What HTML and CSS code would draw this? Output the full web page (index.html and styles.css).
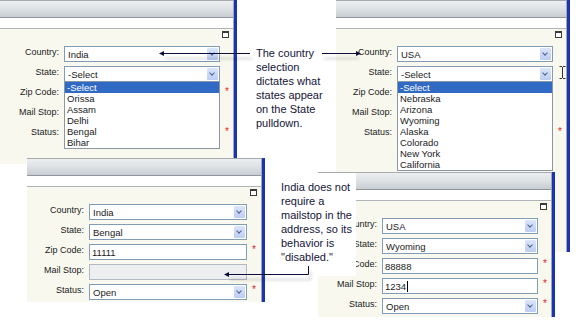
FILE: index.html
```html
<!DOCTYPE html>
<html lang="en">
<head>
    <meta charset="UTF-8">
    <meta name="viewport" content="width=device-width, initial-scale=1.0">
    <title>Country and State Behavior</title>
    <link rel="stylesheet" href="styles.css">
</head>
<body>
<div class="canvas">

    <!-- India, state pulldown open -->
    <div class="panel panel-a">
        <div class="frame">
            <div class="head"></div>
            <div class="strip"></div>
            <div class="body">
                <span class="max-icon"></span>
                <div class="form">
                    <label>Country:</label>
                    <div class="select"><span>India</span><i class="drop"></i></div>
                    <span></span>

                    <label>State:</label>
                    <div class="select">
                        <span>-Select</span><i class="drop"></i>
                        <ul class="list">
                            <li class="on">-Select</li>
                            <li>Orissa</li>
                            <li>Assam</li>
                            <li>Delhi</li>
                            <li>Bengal</li>
                            <li>Bihar</li>
                        </ul>
                    </div>
                    <span></span>

                    <label>Zip Code:</label>
                    <div class="input"></div>
                    <span class="req">*</span>

                    <label>Mail Stop:</label>
                    <div class="input"></div>
                    <span></span>

                    <label>Status:</label>
                    <div class="select"><span></span><i class="drop"></i></div>
                    <span class="req">*</span>
                </div>
            </div>
        </div>
    </div>

    <!-- USA, state pulldown open -->
    <div class="panel panel-b">
        <div class="frame">
            <div class="head"></div>
            <div class="strip"></div>
            <div class="body">
                <span class="max-icon"></span>
                <div class="form">
                    <label>Country:</label>
                    <div class="select"><span>USA</span><i class="drop"></i></div>
                    <span></span>

                    <label>State:</label>
                    <div class="select">
                        <span>-Select</span><i class="drop"></i>
                        <ul class="list">
                            <li class="on">-Select</li>
                            <li>Nebraska</li>
                            <li>Arizona</li>
                            <li>Wyoming</li>
                            <li>Alaska</li>
                            <li>Colorado</li>
                            <li>New York</li>
                            <li>California</li>
                        </ul>
                    </div>
                    <span></span>

                    <label>Zip Code:</label>
                    <div class="input"></div>
                    <span></span>

                    <label>Mail Stop:</label>
                    <div class="input"></div>
                    <span></span>

                    <label>Status:</label>
                    <div class="select"><span></span><i class="drop"></i></div>
                    <span class="req">*</span>
                </div>
            </div>
        </div>
    </div>

    <div class="callout callout-top">
        The country<br>selection<br>dictates what<br>states appear<br>on the State<br>pulldown.
    </div>

    <!-- India, filled in -->
    <div class="panel panel-c">
        <div class="frame">
            <div class="head"></div>
            <div class="strip"></div>
            <div class="body">
                <span class="max-icon"></span>
                <div class="form">
                    <label>Country:</label>
                    <div class="select"><span>India</span><i class="drop"></i></div>
                    <span></span>

                    <label>State:</label>
                    <div class="select"><span>Bengal</span><i class="drop"></i></div>
                    <span></span>

                    <label>Zip Code:</label>
                    <div class="input">11111</div>
                    <span class="req">*</span>

                    <label>Mail Stop:</label>
                    <div class="input off"></div>
                    <span></span>

                    <label>Status:</label>
                    <div class="select"><span>Open</span><i class="drop"></i></div>
                    <span class="req">*</span>
                </div>
            </div>
        </div>
    </div>

    <!-- USA, filled in -->
    <div class="panel panel-d">
        <div class="frame">
            <div class="head"></div>
            <div class="strip"></div>
            <div class="body">
                <span class="max-icon"></span>
                <div class="form">
                    <label>Country:</label>
                    <div class="select"><span>USA</span><i class="drop"></i></div>
                    <span></span>

                    <label>State:</label>
                    <div class="select"><span>Wyoming</span><i class="drop"></i></div>
                    <span></span>

                    <label>Zip Code:</label>
                    <div class="input">88888</div>
                    <span class="req">*</span>

                    <label>Mail Stop:</label>
                    <div class="input">1234<span class="caret"></span></div>
                    <span class="req">*</span>

                    <label>Status:</label>
                    <div class="select"><span>Open</span><i class="drop"></i></div>
                    <span class="req">*</span>
                </div>
            </div>
        </div>
    </div>

    <div class="callout callout-bottom">
        India does not<br>require a<br>mailstop in the<br>address, so its<br>behavior is<br>"disabled."
    </div>

    <!-- connector lines and the mouse cursor -->
    <svg class="marks" width="576" height="320" viewBox="0 0 576 320">
        <defs>
            <filter id="shade" filterUnits="userSpaceOnUse" x="0" y="0" width="576" height="320">
                <feDropShadow dx="2" dy="5" stdDeviation="1.6" flood-color="#000" flood-opacity="0.28"/>
            </filter>
        </defs>
        <g filter="url(#shade)" stroke="#0c0c3c" fill="none" stroke-width="1">
            <path d="M163 53.5H250"/>
            <path d="M322 53.5H357"/>
            <path d="M308.5 266V274.5H228"/>
        </g>
        <g fill="#0c0c3c">
            <path d="M159 53.5l5-2.5v5z"/>
            <path d="M361 53.5l-5-2.5v5z"/>
            <path d="M224 274.5l5-2.5v5z"/>
        </g>
        <path d="M559.5 66.5h2.5M563 66.5h2.5M562.5 67V78M559.5 78.5h2.5M563 78.5h2.5" stroke="#333" stroke-width="1" fill="none"/>
    </svg>

</div>
</body>
</html>
```

FILE: styles.css
```css
* {
    box-sizing: border-box;
}

body {
    margin: 0;
    background-color: #ffffff;
    font-family: "Liberation Sans", Arial, sans-serif;
    color: #1a1a1a;
}

.canvas {
    position: relative;
    width: 576px;
    height: 320px;
    overflow: hidden;
}

/* each screenshot sits on the canvas like a window */
.panel {
    position: absolute;
    border-right: 3px solid #1a34b4; /* blue window edge */
    overflow: hidden;
    --label: 59px;
    --field: 156px;
}

.panel-a { left: 0; top: 0; width: 237px; height: 164px; z-index: 1; }
.panel-b { left: 333px; top: 0; width: 237px; height: 252px; z-index: 1; }
.panel-c { left: 27px; top: 158px; width: 238px; height: 144px; z-index: 3; --label: 57px; --field: 158px; }
.panel-d { left: 318px; top: 172px; width: 237px; height: 145px; z-index: 3; }

.frame {
    height: 100%;
    display: flex;
    flex-direction: column;
    border-right: 1px solid #a2a8b0;
}

.head {
    height: 18px;
    flex-shrink: 0;
    border-top: 1px solid #a6abb0;
    border-bottom: 1px solid #8e959c;
    background: linear-gradient(#eceef0, #dfe3e6 45%, #c8cdd2);
}

.strip {
    height: 11px;
    flex-shrink: 0;
    background-color: #ffffff;
    border-bottom: 1px solid #afb4ba;
}

.body {
    position: relative;
    flex: 1;
    background-color: #f8f8ee;
    padding-top: 17px;
}

.max-icon {
    position: absolute;
    top: 2px;
    right: 4px;
    width: 7px;
    height: 7px;
    border: 1px solid #3a3a3a;
    border-top-width: 2px;
    background-color: #ffffff;
}

.form {
    display: grid;
    grid-template-columns: var(--label) var(--field) 10px;
    grid-auto-rows: 16px;
    column-gap: 5px;
    row-gap: 4px;
}

.form label {
    text-align: right;
    font-size: 9px;
    line-height: 13px;
    white-space: nowrap;
}

.select, .input {
    position: relative;
    display: flex;
    align-items: center;
    border: 1px solid #7f9db9;
    background-color: #ffffff;
    font-size: 9.5px;
}

.select span {
    flex: 1;
    padding-left: 3px;
}

.input {
    padding-left: 2px;
}

.input.off {
    background-color: #eceef0;
    border-color: #b2bac4;
}

.caret {
    display: inline-block;
    width: 1px;
    height: 11px;
    margin-left: 1px;
    background-color: #000000;
}

.drop {
    position: relative;
    width: 11px;
    height: 12px;
    margin-right: 1px;
    border-radius: 1px;
    background: linear-gradient(#dbe5fb, #bccdf3);
}

.drop::after {
    content: "";
    position: absolute;
    left: 3px;
    top: 3px;
    width: 3px;
    height: 3px;
    border-right: 1.5px solid #4d6185;
    border-bottom: 1.5px solid #4d6185;
    transform: rotate(45deg);
}

/* open pulldown */
.list {
    position: absolute;
    left: -1px;
    right: -1px;
    top: 14px;
    margin: 0;
    padding: 0;
    list-style: none;
    background-color: #ffffff;
    border: 1px solid #8a96a4;
    z-index: 2;
}

.list li {
    height: 11px;
    line-height: 11px;
    padding-left: 2px;
    font-size: 9.5px;
}

.list li.on {
    background-color: #316ac5;
    color: #ffffff;
}

.req {
    color: #e02424;
    font-size: 10px;
    line-height: 10px;
    padding-top: 1px;
}

/* explanation boxes */
.callout {
    position: absolute;
    background-color: #ffffff;
    font-size: 11px;
    line-height: 14px;
    color: #14143a;
}

.callout-top {
    left: 237px;
    top: 0;
    width: 99px;
    height: 172px;
    padding: 46px 0 0 19px;
    z-index: 2;
}

.callout-bottom {
    left: 265px;
    top: 173px;
    width: 91px;
    height: 103px;
    padding: 7px 0 0 16px;
    z-index: 4;
}

.marks {
    position: absolute;
    left: 0;
    top: 0;
    z-index: 5;
    pointer-events: none;
}
```
